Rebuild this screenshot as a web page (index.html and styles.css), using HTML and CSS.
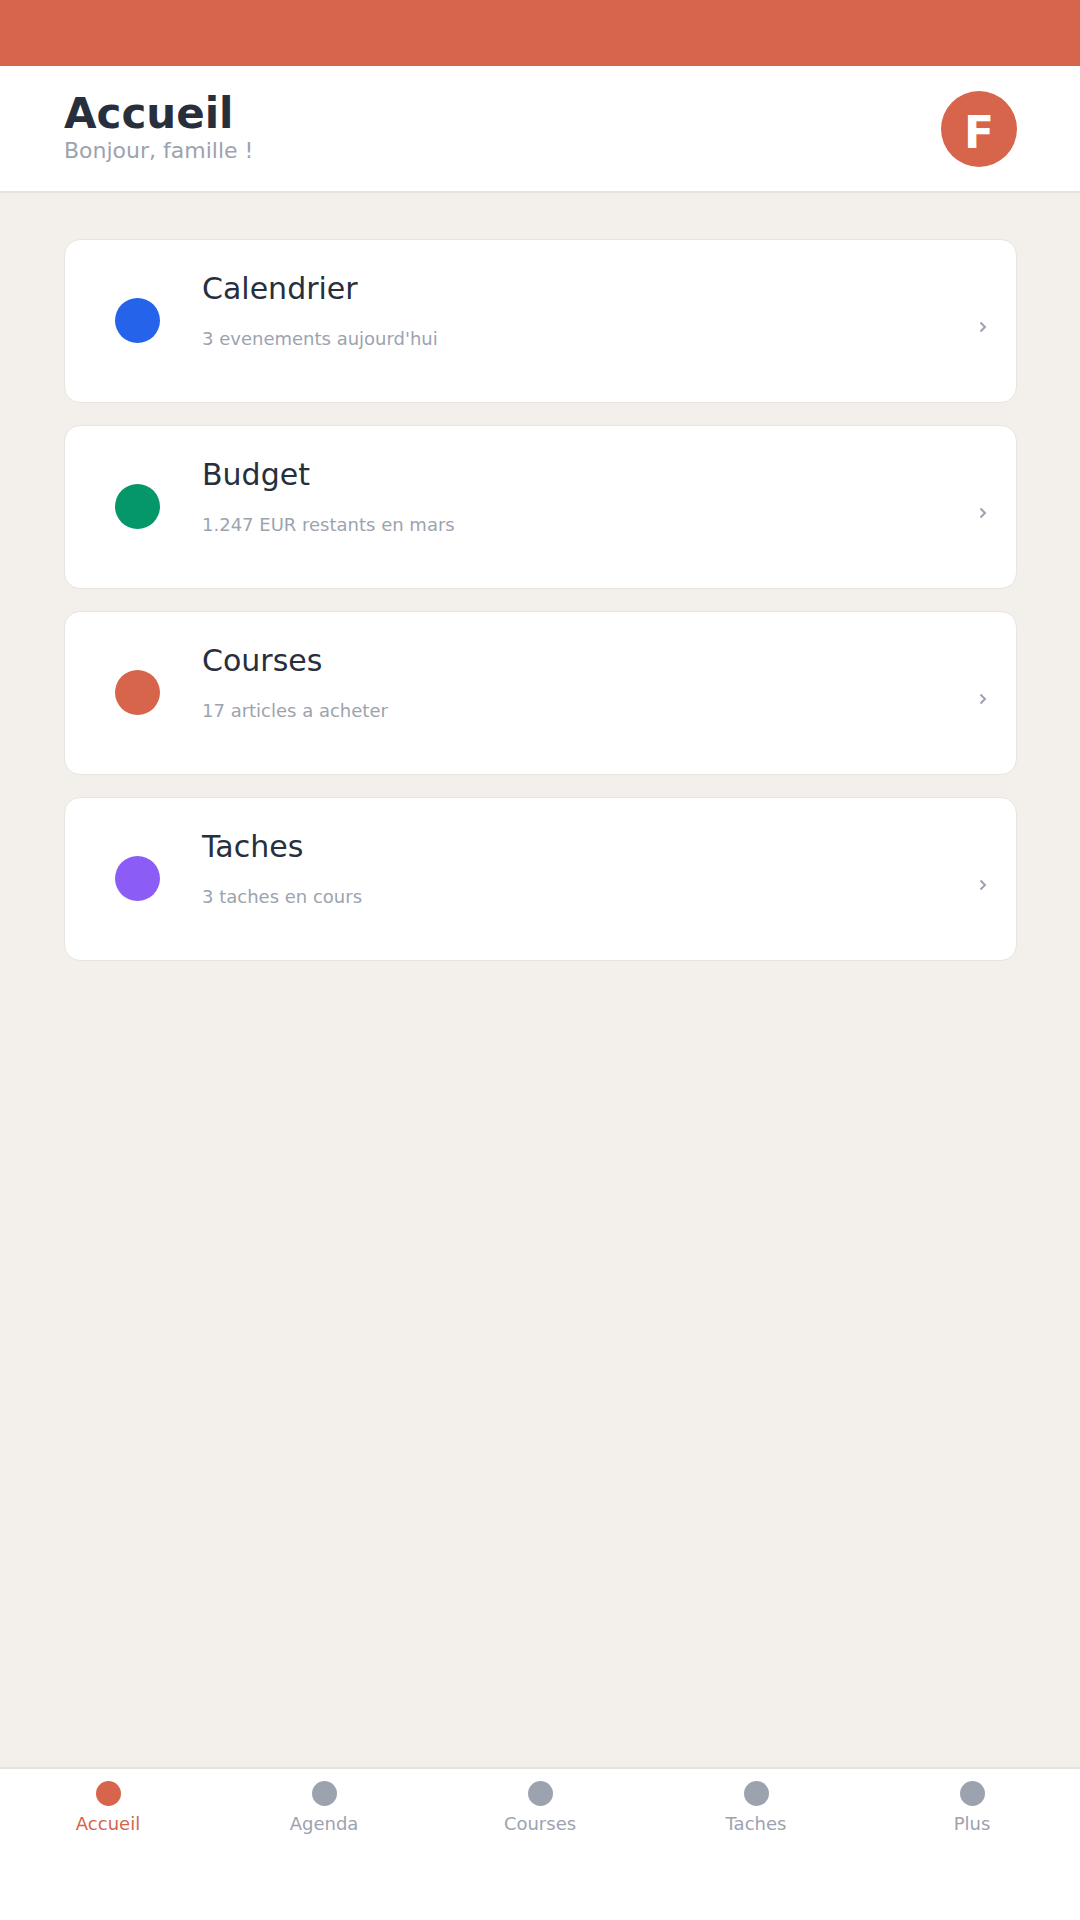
FILE: index.html
```html
<!DOCTYPE html>
<html lang="fr">
<head>
    <meta charset="UTF-8">
    <meta name="viewport" content="width=device-width, initial-scale=1.0">
    <title>Accueil</title>
    <link rel="stylesheet" href="styles.css">
</head>
<body>
    <div class="app">
        <div class="status-bar"></div>

        <header class="header">
            <div class="header-text">
                <h1>Accueil</h1>
                <p class="greeting">Bonjour, famille !</p>
            </div>
            <div class="avatar">F</div>
        </header>

        <main class="cards">
            <a class="card" href="#">
                <span class="dot dot-blue"></span>
                <div class="card-text">
                    <h2>Calendrier</h2>
                    <p>3 evenements aujourd'hui</p>
                </div>
                <svg class="chevron" width="8" height="12" viewBox="0 0 8 12"><polyline points="1.5,1.5 6,6 1.5,10.5" /></svg>
            </a>
            <a class="card" href="#">
                <span class="dot dot-green"></span>
                <div class="card-text">
                    <h2>Budget</h2>
                    <p>1.247 EUR restants en mars</p>
                </div>
                <svg class="chevron" width="8" height="12" viewBox="0 0 8 12"><polyline points="1.5,1.5 6,6 1.5,10.5" /></svg>
            </a>
            <a class="card" href="#">
                <span class="dot dot-orange"></span>
                <div class="card-text">
                    <h2>Courses</h2>
                    <p>17 articles a acheter</p>
                </div>
                <svg class="chevron" width="8" height="12" viewBox="0 0 8 12"><polyline points="1.5,1.5 6,6 1.5,10.5" /></svg>
            </a>
            <a class="card" href="#">
                <span class="dot dot-purple"></span>
                <div class="card-text">
                    <h2>Taches</h2>
                    <p>3 taches en cours</p>
                </div>
                <svg class="chevron" width="8" height="12" viewBox="0 0 8 12"><polyline points="1.5,1.5 6,6 1.5,10.5" /></svg>
            </a>
        </main>

        <nav class="tab-bar">
            <a class="tab active" href="#"><span class="tab-dot"></span>Accueil</a>
            <a class="tab" href="#"><span class="tab-dot"></span>Agenda</a>
            <a class="tab" href="#"><span class="tab-dot"></span>Courses</a>
            <a class="tab" href="#"><span class="tab-dot"></span>Taches</a>
            <a class="tab" href="#"><span class="tab-dot"></span>Plus</a>
        </nav>
    </div>
</body>
</html>
```

FILE: styles.css
```css
* {
    box-sizing: border-box;
}
body {
    margin: 0;
    background-color: #f3f0eb;
    font-family: "DejaVu Sans", Verdana, sans-serif;
    color: #272f3d;
}
.app {
    display: flex;
    flex-direction: column;
    height: 1920px;
}
.status-bar {
    height: 66px;
    background-color: #d6654b;
}
.header {
    display: flex;
    align-items: center;
    justify-content: space-between;
    height: 127px;
    padding: 0 63px 0 64px;
    background-color: #fff;
    border-bottom: 2px solid #e6e2dd;
}
.header-text {
    margin-bottom: 4px;
}
.header h1 {
    margin: 0;
    font-size: 42px;
    line-height: 1.15;
    font-weight: bold;
}
.greeting {
    margin: 0;
    font-size: 22px;
    line-height: 1.15;
    color: #9ca3af;
}
.avatar {
    display: flex;
    align-items: center;
    justify-content: center;
    width: 76px;
    height: 76px;
    padding-top: 8px;
    border-radius: 50%;
    background-color: #d6654b;
    color: #fff;
    font-size: 44px;
    font-weight: bold;
}
.cards {
    flex: 1;
    display: flex;
    flex-direction: column;
    gap: 22px;
    padding: 46px 63px 46px 64px;
}
.card {
    display: flex;
    align-items: center;
    height: 164px;
    padding: 0 29px 0 50px;
    background-color: #fff;
    border: 1px solid #e8e4df;
    border-radius: 16px;
    text-decoration: none;
    color: inherit;
}
.dot {
    flex-shrink: 0;
    width: 45px;
    height: 45px;
    margin-bottom: 2px;
    border-radius: 50%;
}
.dot-blue { background-color: #2563eb; }
.dot-green { background-color: #059669; }
.dot-orange { background-color: #d6654b; }
.dot-purple { background-color: #8b5cf6; }
.card-text {
    flex: 1;
    margin-left: 42px;
    margin-bottom: 23px;
}
.card-text h2 {
    margin: 0 0 22px;
    font-size: 30px;
    font-weight: normal;
}
.card-text p {
    margin: 0;
    font-size: 18px;
    color: #9ca3af;
}
.chevron {
    margin-top: 11px;
    fill: none;
    stroke: #9ca3af;
    stroke-width: 2;
}
.tab-bar {
    display: flex;
    height: 153px;
    padding-top: 12px;
    background-color: #fff;
    border-top: 2px solid #e6e2dd;
}
.tab {
    flex: 1;
    display: flex;
    flex-direction: column;
    align-items: center;
    gap: 7px;
    font-size: 18px;
    color: #9ca3af;
    text-decoration: none;
}
.tab-dot {
    width: 25px;
    height: 25px;
    border-radius: 50%;
    background-color: #9ca3af;
}
.tab.active {
    color: #d6654b;
}
.tab.active .tab-dot {
    background-color: #d6654b;
}
```
